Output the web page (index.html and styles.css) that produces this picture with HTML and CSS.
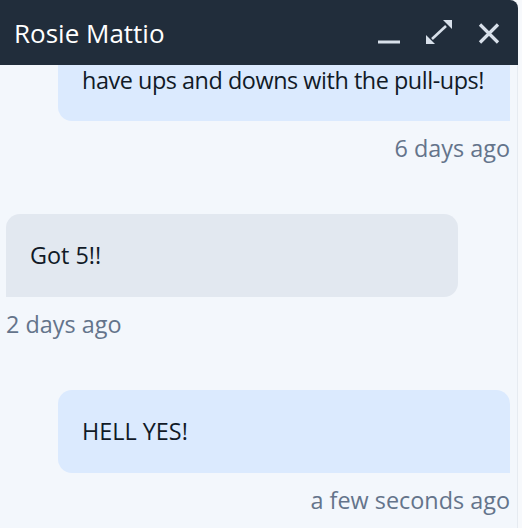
FILE: index.html
```html
<!DOCTYPE html>
<html>
	<head>
		<meta name="viewport" content="width=device-width, initial-scale=1" />
		<link rel="stylesheet" href="styles.css">
	</head>
	<body>
		<div class="chat">
			<div class="chat-header">
				<h2>Rosie Mattio</h2>
				<div class="actions">
					<button class="icon-btn" title="Minimize">
						<svg width="28" height="28" viewBox="0 0 28 28"><line x1="3" y1="23" x2="25" y2="23" stroke="currentColor" stroke-width="3"/></svg>
					</button>
					<button class="icon-btn" title="Expand">
						<svg width="28" height="28" viewBox="0 0 28 28">
							<line x1="7" y1="20" x2="21" y2="7" stroke="currentColor" stroke-width="2.6"/>
							<polygon points="1,25 1,16 10,25" fill="currentColor"/>
							<polygon points="27,1 18,1 27,10" fill="currentColor"/>
						</svg>
					</button>
					<button class="icon-btn" title="Close">
						<svg width="28" height="28" viewBox="0 0 28 28"><path d="M5 5.5 L23 23.5 M23 5.5 L5 23.5" stroke="currentColor" stroke-width="3.2"/></svg>
					</button>
				</div>
			</div>
			<div class="messages">
				<div class="msg out">
					<div class="bubble tall">have ups and downs with the pull-ups!</div>
					<div class="time">6 days ago</div>
				</div>
				<div class="msg in">
					<div class="bubble">Got 5!!</div>
					<div class="time">2 days ago</div>
				</div>
				<div class="msg out">
					<div class="bubble">HELL YES!</div>
					<div class="time">a few seconds ago</div>
				</div>
			</div>
		</div>
	</body>
</html>
```

FILE: styles.css
```css
body {
    margin: 0;
    font-family: "Open Sans", Arial, sans-serif;
    background-color: #f7f9fc;
}

.chat {
    width: 518px;
    height: 528px;
    display: flex;
    flex-direction: column;
    border-radius: 0 8px 0 0;
    overflow: hidden;
}

.chat-header {
    height: 65px;
    flex-shrink: 0;
    background-color: #212d3b;
    color: #fff;
    display: flex;
    align-items: center;
    justify-content: space-between;
    padding: 0 15px 0 14px;
}

.chat-header h2 {
    margin: 0;
    font-size: 26px;
    font-weight: 400;
}

.actions {
    display: flex;
    gap: 22px;
}

.icon-btn {
    background: none;
    border: none;
    padding: 0;
    width: 28px;
    height: 28px;
    color: #d8e0ea;
    cursor: pointer;
}

.icon-btn svg { display: block; }

.messages {
    flex: 1;
    overflow: hidden;
    display: flex;
    flex-direction: column;
    justify-content: flex-end;
    padding: 0 7px 12px 6px;
    background-color: #f3f7fc;
    border-right: 1px solid #e6ebf1;
    font-size: 23.4px;
    line-height: 31px;
}

.msg {
    display: flex;
    flex-direction: column;
    margin-bottom: 50px;
}

.msg:last-child { margin-bottom: 0; }

.bubble {
    width: 452px;
    box-sizing: border-box;
    padding: 26px 16px 26px 24px;
    color: #111a27;
    border-radius: 14px;
    white-space: nowrap;
    flex-shrink: 0;
}

.bubble.tall {
    padding-top: 40px;
    padding-bottom: 25px;
    line-height: 32px;
    letter-spacing: -0.45px;
}

.msg.out { align-items: flex-end; }
.msg.out .bubble {
    background-color: #dbeafe;
    border-bottom-right-radius: 0;
}

.msg.in { align-items: flex-start; }
.msg.in .bubble {
    background-color: #e2e8f0;
    border-bottom-left-radius: 0;
}

.time {
    margin-top: 12px;
    color: #64748b;
}
```
